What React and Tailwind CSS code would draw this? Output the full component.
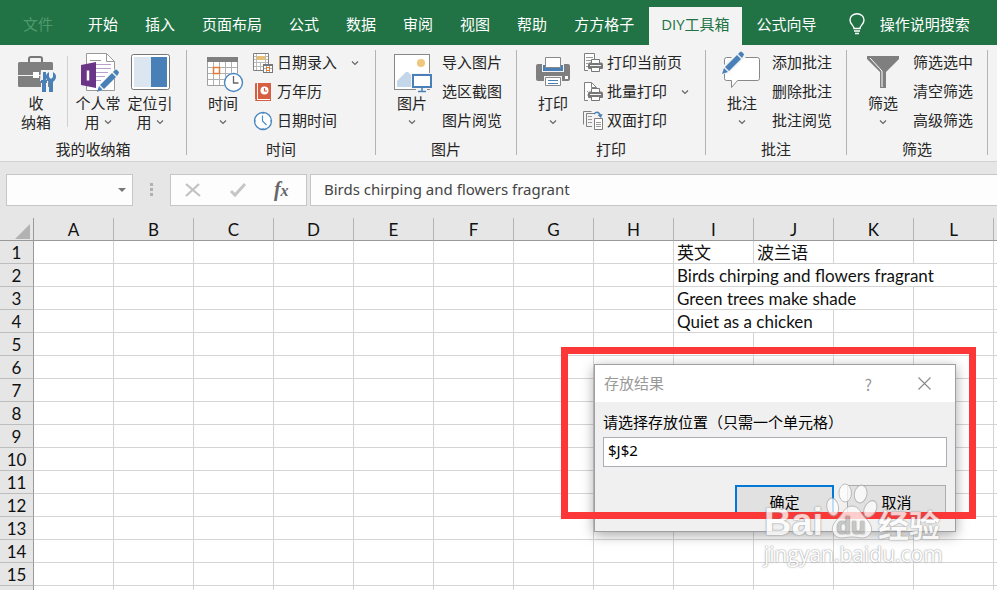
import { useState } from "react";

const tabs = ["开始", "插入", "页面布局", "公式", "数据", "审阅", "视图", "帮助", "方方格子", "DIY工具箱", "公式向导"];
const columns = ["A", "B", "C", "D", "E", "F", "G", "H", "I", "J", "K", "L", ""];
const rows = [1, 2, 3, 4, 5, 6, 7, 8, 9, 10, 11, 12, 13, 14, 15, ""];

// text cells by row, span = how many columns the text runs over
const cells = {
  1: { I: { text: "英文", span: 1 }, J: { text: "波兰语", span: 1 } },
  2: { I: { text: "Birds chirping and flowers fragrant", span: 4 } },
  3: { I: { text: "Green trees make shade", span: 3 } },
  4: { I: { text: "Quiet as a chicken", span: 2 } },
};

function Big({ children }) {
  return (
    <svg width="46" height="45" viewBox="0 0 46 45" fill="none" className="shrink-0" aria-hidden="true">
      {children}
    </svg>
  );
}

function Small({ children }) {
  return (
    <svg width="20" height="20" viewBox="0 0 20 20" fill="none" className="shrink-0" aria-hidden="true">
      {children}
    </svg>
  );
}

function Chevron() {
  return (
    <svg width="8" height="8" viewBox="0 0 8 8" fill="none" stroke="#666" strokeWidth="1.2" className="inline-block shrink-0" aria-hidden="true">
      <path d="M1 2.5 4 5.5 7 2.5" />
    </svg>
  );
}

function ToolboxIcon() {
  return (
    <Big>
      <path d="M16 14v-3q0-2 2-2h9q2 0 2 2v3" stroke="#777" strokeWidth="2" />
      <rect x="5" y="14" width="35" height="25" rx="1.5" fill="#7f7f7f" />
      <path d="M5 27.5h35" stroke="#f3f3f3" />
      <rect x="20" y="24" width="6" height="6" fill="#fff" />
      <path d="M28 22h6v11h1v12h-7V33h-1zM34 22h9v9l-2 4v10h-5V34l-3-4z" fill="#f3f3f3" />
      <path d="M30 24h3v8h1v3h-1v9h-4v-9h-1v-3h2z" fill="#4a80b8" />
      <path d="M36 24v5l2 2 2-2v-5c5 3 3 8 0 10v10h-4V34c-3-2-5-7 0-10z" fill="#4a80b8" />
    </Big>
  );
}

function NotebookIcon() {
  return (
    <Big>
      <path d="M11.5 5.5h20l8 8v29h-28z" fill="#fff" stroke="#999" />
      <path d="M31.5 5.5v8h8" stroke="#999" />
      <path d="M15 12.5h11" stroke="#999" />
      <path d="M21 16.5h15M21 20.5h15M21 24.5h12M21 28.5h9M21 32.5h5" stroke="#b9a0cc" />
      <path d="M6 17l15-3v26l-15-3z" fill="#6a3587" />
      <path d="M13 22.5v10" stroke="#fff" strokeWidth="2.5" />
      <path d="M23 43l3-7L40 21l5 4-15 15z" fill="#f3f3f3" />
      <path d="M22 44l2-6 3.5 3.5zM25 37l12-12 4 4-12 12zM38 24l2-2q1-1 2 0l1.5 1.5q1 1 0 2L42 28z" fill="#4a80b8" />
    </Big>
  );
}

function PaneIcon() {
  return (
    <Big>
      <rect x="4.5" y="6.5" width="38" height="35" rx="2" fill="#fff" stroke="#777" />
      <rect x="7" y="9" width="17" height="30" fill="#dce6f1" />
      <rect x="24" y="9" width="16" height="30" fill="#4a80b8" />
    </Big>
  );
}

function CalendarIcon() {
  return (
    <Big>
      <path d="M7.5 12.5h30v25h-30z" fill="#fff" stroke="#a0a0a0" />
      <path d="M13.5 13v24M19.5 13v24M25.5 13v24M31.5 13v24M8 19.5h29M8 25.5h29M8 31.5h29" stroke="#b0b0b0" />
      <rect x="7" y="9" width="31" height="5" fill="#7f7f7f" />
      <rect x="13.5" y="19.5" width="6" height="6" fill="#fff" stroke="#e07b39" strokeWidth="1.5" />
      <circle cx="33.5" cy="34.5" r="10" fill="#f3f3f3" />
      <circle cx="33.5" cy="34.5" r="9" fill="#fff" stroke="#4a86c0" strokeWidth="1.4" />
      <path d="M33.5 28v7h5" stroke="#666" strokeWidth="1.3" />
    </Big>
  );
}

function PictureIcon() {
  return (
    <Big>
      <rect x="5.5" y="6.5" width="35" height="35" fill="#fff" stroke="#888" />
      <circle cx="32" cy="15" r="4" fill="#eec67c" />
      <path d="M8 39V33l9-9h2l5 5v10z" fill="#c3d6ea" />
      <path d="M22 25h22v16h-6v3H27v-3h-5z" fill="#f3f3f3" />
      <rect x="24" y="27" width="18" height="12" fill="#fff" stroke="#4a80b8" strokeWidth="2" />
      <path d="M33 40v3M29 43.5h8" stroke="#4a80b8" strokeWidth="1.5" />
    </Big>
  );
}

function PrinterIcon() {
  return (
    <Big>
      <path d="M8 16h30q2 0 2 2v13q0 2-2 2H8q-2 0-2-2V18q0-2 2-2z" fill="#7f7f7f" />
      <path d="M12 15h22v9H12z" fill="#f3f3f3" />
      <path d="M13 17h20v6H13z" fill="#4a80b8" />
      <path d="M15.5 9.5h15v10h-15z" fill="#fff" stroke="#888" />
      <path d="M14 28h18v10H14z" fill="#f3f3f3" />
      <path d="M15.5 29.5h15v8h-15z" fill="#fff" stroke="#888" />
      <path d="M18 32.5h10M18 35.5h10" stroke="#4a80b8" />
      <rect x="35" y="28" width="3" height="3" fill="#fff" />
    </Big>
  );
}

function CommentIcon() {
  return (
    <Big>
      <path d="M7.5 9.5h31q2 0 2 2v19q0 2-2 2h-20l-6 7v-7h-5q-2 0-2-2v-19q0-2 2-2z" fill="#fff" stroke="#888" />
      <path d="M1 27l3-9L19 3l8 6L10 25z" fill="#f3f3f3" />
      <path d="M3 26l2-6 4 4zM6 19L18 7l4 4L10 23zM19 6l2-2q1-1 2 0l1.5 1.5q1 1 0 2L23 10z" fill="#4a80b8" />
    </Big>
  );
}

function FunnelIcon() {
  return (
    <Big>
      <path d="M7 8h32v3L26 24v16h-6V24L7 11z" fill="#7f7f7f" />
      <path d="M10 10l12 13v16" stroke="#fff" />
    </Big>
  );
}

function DateEntryIcon() {
  return (
    <Small>
      <path d="M.5.5h15v17H.5z" fill="#fff" stroke="#808080" />
      <path d="M1 9.5h14M1 13.5h14M3.5 1v16M7.5 9v8M12.5 1v16M1 3.5h2M13 3.5h2M1 6.5h2M13 6.5h2" stroke="#bbb" />
      <rect x="4" y="3" width="8" height="4" fill="#e9bf73" />
      <path d="M10 11h10v9H10z" fill="#777" />
      <path d="M11 13h8v6h-8z" fill="#fff" />
      <path d="M11 15.5h8M13.5 13v6M16.5 13v6" stroke="#aaa" />
      <rect x="13.5" y="14.5" width="3" height="3" fill="#fff" stroke="#e07b39" />
    </Small>
  );
}

function AlmanacIcon() {
  return (
    <Small>
      <path d="M2 2q0-1 1-1h1v16H2zM5 1h13v16H5z" fill="#d65f42" />
      <path d="M3 17h15v2H3q-1 0-1-1z" fill="#d65f42" />
      <path d="M4 17.5h13" stroke="#fff" />
      <circle cx="11.5" cy="8.5" r="4" fill="#fff" />
      <path d="M11.5 6v3H14" stroke="#d65f42" strokeWidth="1.2" />
    </Small>
  );
}

function ClockIcon() {
  return (
    <Small>
      <circle cx="10" cy="10" r="8.5" fill="#fff" stroke="#4a86c0" strokeWidth="1.3" />
      <path d="M9.5 4.5V10l4 4" stroke="#4a90c8" strokeWidth="1.2" />
      <path d="M10 1v2M10 17v2M1 10h2M17 10h2" stroke="#4a86c0" />
    </Small>
  );
}

function MiniPrinter() {
  return (
    <g>
      <path d="M5 8h15v11H5z" fill="#f3f3f3" />
      <path d="M7 9.5h11q2 0 2 2V15q0 1-1 1H6q-1 0-1-1v-3.5q0-2 2-2z" fill="#777" />
      <path d="M8.5 6.5h8v4h-8z" fill="#fff" stroke="#777" />
      <path d="M8.5 14.5h8v4h-8z" fill="#fff" stroke="#777" />
      <path d="M7 12.5h11" stroke="#f3f3f3" />
    </g>
  );
}

function PrintPageIcon() {
  return (
    <Small>
      <path d="M1.5.5h10v17h-10z" fill="#fff" stroke="#808080" />
      <path d="M3 4.5h7M3 7.5h5M3 10.5h3M3 13.5h3" stroke="#999" />
      <MiniPrinter />
    </Small>
  );
}

function PrintBatchIcon() {
  return (
    <Small>
      <path d="M1.5.5h7l5 5v13h-12z" fill="#fff" stroke="#808080" />
      <path d="M8.5.5v5h5" stroke="#808080" />
      <path d="M4 10l2-2M4 13h2" stroke="#999" />
      <MiniPrinter />
    </Small>
  );
}

function DuplexIcon() {
  return (
    <Small>
      <path d="M8.5.5h-8v13M12 2.5H3.5v13H9" stroke="#808080" />
      <path d="M5 5.5h4M5 8.5h4M5 11.5h4" stroke="#999" />
      <path d="M11.5 7.5h8v11h-8z" fill="#fff" stroke="#808080" />
      <path d="M13 11.5h5M13 13.5h5M13 15.5h5" stroke="#999" />
      <path d="M11 3q4-4 6.5 1.5" stroke="#4a80b8" strokeWidth="1.6" />
      <path d="M14.5 4l5-1-1.5 4z" fill="#4a80b8" />
    </Small>
  );
}

const groups = [
  {
    label: "时间",
    width: "w-[189px]",
    big: { icon: <CalendarIcon />, label: "时间" },
    items: [
      { icon: <DateEntryIcon />, label: "日期录入", menu: true },
      { icon: <AlmanacIcon />, label: "万年历" },
      { icon: <ClockIcon />, label: "日期时间" },
    ],
  },
  {
    label: "图片",
    width: "w-[141px]",
    big: { icon: <PictureIcon />, label: "图片" },
    items: [{ label: "导入图片" }, { label: "选区截图" }, { label: "图片阅览" }],
  },
  {
    label: "打印",
    width: "w-[189px]",
    big: { icon: <PrinterIcon />, label: "打印" },
    items: [
      { icon: <PrintPageIcon />, label: "打印当前页" },
      { icon: <PrintBatchIcon />, label: "批量打印", menu: true },
      { icon: <DuplexIcon />, label: "双面打印" },
    ],
  },
  {
    label: "批注",
    width: "w-[141px]",
    big: { icon: <CommentIcon />, label: "批注" },
    items: [{ label: "添加批注" }, { label: "删除批注" }, { label: "批注阅览" }],
  },
  {
    label: "筛选",
    width: "w-[141px]",
    big: { icon: <FunnelIcon />, label: "筛选" },
    items: [{ label: "筛选选中" }, { label: "清空筛选" }, { label: "高级筛选" }],
  },
];

function BigButton({ icon, lines, menu }) {
  return (
    <button type="button" className="flex w-[52px] shrink-0 flex-col items-center leading-[19px] whitespace-nowrap">
      {icon}
      <span>{lines[0]}</span>
      <span className="flex h-[19px] items-center gap-1">
        {lines[1]}
        {menu && <Chevron />}
      </span>
    </button>
  );
}

function Group({ label, width, children }) {
  return (
    <section className={`flex shrink-0 ${width}`}>
      <div className="flex flex-1 flex-col pt-[3px]">
        <div className="flex h-[87px] pl-[10px]">{children}</div>
        <h2 className="mt-1 text-center leading-5">{label}</h2>
      </div>
      <div className="mt-[5px] mb-[6px] w-px bg-[#b4b4b4]" />
    </section>
  );
}

function Ribbon() {
  return (
    <div className="flex h-[117px] shrink-0 overflow-hidden border-b border-[#d2d2d2] bg-[#f3f3f3] text-[15px] text-[#262626]">
      <Group label="我的收纳箱" width="w-[187px]">
        <BigButton icon={<ToolboxIcon />} lines={["收", "纳箱"]} />
        <div className="mt-2 mr-1 mb-2 ml-[5px] w-px bg-[#d0d0d0]" />
        <BigButton icon={<NotebookIcon />} lines={["个人常", "用"]} menu />
        <BigButton icon={<PaneIcon />} lines={["定位引", "用"]} menu />
      </Group>
      {groups.map((g) => (
        <Group key={g.label} label={g.label} width={g.width}>
          <BigButton icon={g.big.icon} lines={[g.big.label, ""]} menu />
          <div className="flex flex-col pl-1">
            {g.items.map((item) => (
              <button key={item.label} type="button" className="flex h-[29px] items-center gap-1 whitespace-nowrap">
                {item.icon}
                <span>{item.label}</span>
                {item.menu && (
                  <span className="flex pl-[10px]">
                    <Chevron />
                  </span>
                )}
              </button>
            ))}
          </div>
        </Group>
      ))}
    </div>
  );
}

function FormulaBar() {
  const [formula, setFormula] = useState("Birds chirping and flowers fragrant");

  return (
    <div className="flex h-14 shrink-0 items-start bg-[#e6e6e6] pt-3 pl-[6px]">
      <div className="relative">
        <select aria-label="名称框" className="block h-8 w-[127px] appearance-none border border-[#c6c6c6] bg-[#fdfdfd]">
          <option value=""></option>
        </select>
        <svg width="8" height="4" viewBox="0 0 8 4" className="pointer-events-none absolute top-[14px] right-[7px]" aria-hidden="true">
          <path d="M0 0h8L4 4z" fill="#777" />
        </svg>
      </div>
      <div className="flex h-8 w-[37px] flex-col items-center justify-center gap-[2px] pb-[2px]">
        <span className="size-[3px] bg-[#b0b0b0]" />
        <span className="size-[3px] bg-[#b0b0b0]" />
        <span className="size-[3px] bg-[#b0b0b0]" />
      </div>
      <div className="mr-[3px] flex h-8 w-[137px] items-center justify-around border border-[#c6c6c6] bg-[#fdfdfd] pr-1">
        <button type="button" aria-label="取消输入">
          <svg width="18" height="16" viewBox="0 0 18 16" fill="none" stroke="#c2c2c2" strokeWidth="2.2">
            <path d="M2 2l14 12M15 2L2 14" />
          </svg>
        </button>
        <button type="button" aria-label="输入">
          <svg width="18" height="16" viewBox="0 0 18 16" fill="none" stroke="#c6c6c6" strokeWidth="3">
            <path d="M2 9l4 4L16 2" />
          </svg>
        </button>
        <button type="button" className="font-['Liberation_Serif',serif] text-xl leading-6 font-bold text-[#666] italic">
          f<span className="text-base">x</span>
        </button>
      </div>
      <input
        aria-label="编辑栏"
        value={formula}
        onChange={(e) => setFormula(e.target.value)}
        className="h-8 min-w-0 flex-1 border border-r-0 border-[#c6c6c6] bg-[#fdfdfd] pb-[2px] pl-[13px] font-['Noto_Sans',sans-serif] text-[15px] text-[#444] outline-none"
      />
    </div>
  );
}

function Row({ n }) {
  const row = cells[n] || {};
  const out = [];
  for (let i = 0; i < columns.length; ) {
    const cell = row[columns[i]];
    const span = cell ? cell.span : 1;
    out.push(
      <td key={i} colSpan={span} className="h-[23px] border-r border-b border-[#d4d4d4] p-0 pt-[2px] pl-[3px] leading-5 whitespace-nowrap">
        {cell && cell.text}
      </td>
    );
    i += span;
  }
  return (
    <tr>
      <th className="h-[23px] border-r border-b border-r-[#999] border-b-[#bdbdbd] bg-[#e6e6e6] p-0 pt-[2px] leading-5 font-normal">{n}</th>
      {out}
    </tr>
  );
}

function Sheet() {
  return (
    <div className="min-h-0 flex-1 overflow-hidden bg-white font-['Lato','Noto_Sans_CJK_SC',sans-serif] text-[17px] text-[#111]">
      <table className="w-[1074px] table-fixed border-separate border-spacing-0">
        <colgroup>
          <col className="w-[34px]" />
          {columns.map((c, i) => (
            <col key={i} className="w-20" />
          ))}
        </colgroup>
        <thead>
          <tr className="bg-[#e6e6e6]">
            <th className="h-[23px] border-r border-b border-[#999] p-0" aria-label="全选">
              <svg width="15" height="15" viewBox="0 0 15 15" className="mt-1 mr-[3px] ml-auto" aria-hidden="true">
                <path d="M15 0v15H0z" fill="#b2b2b2" />
              </svg>
            </th>
            {columns.map((c, i) => (
              <th key={i} className="h-[23px] border-r border-b border-r-[#b4b4b4] border-b-[#999] p-0 pt-[2px] leading-5 font-normal">
                {c}
              </th>
            ))}
          </tr>
        </thead>
        <tbody>
          {rows.map((n) => (
            <Row key={n} n={n} />
          ))}
        </tbody>
      </table>
    </div>
  );
}

function ResultDialog() {
  const [value, setValue] = useState("$J$2");

  return (
    <div role="dialog" aria-labelledby="dialog-title" className="border border-[#9f9fa3] bg-[#f0f0f0] text-[15px] text-black shadow-[0_3px_12px_rgba(0,0,0,0.35)]">
      <div className="flex h-[37px] items-center bg-white pr-6 pl-[9px] text-[#999]">
        <h1 id="dialog-title" className="flex-1">存放结果</h1>
        <button type="button" className="mr-[46px] text-base">?</button>
        <button type="button" aria-label="关闭">
          <svg width="13" height="13" viewBox="0 0 13 13" stroke="#888" strokeWidth="1.1">
            <path d="M.5.5l12 12M12.5.5l-12 12" />
          </svg>
        </button>
      </div>
      <div className="px-2 pt-[10px] pb-3">
        <label htmlFor="target" className="block leading-5 whitespace-nowrap">请选择存放位置（只需一个单元格）</label>
        <input
          id="target"
          value={value}
          onChange={(e) => setValue(e.target.value)}
          className="mt-[5px] block h-[30px] w-full border border-[#abadb3] bg-white px-1 pb-1 font-['Noto_Sans',sans-serif] outline-none"
        />
        <div className="mt-[18px] flex justify-end gap-[13px] pr-px">
          <button type="button" className="h-[34px] w-[99px] border-2 border-[#0078d7] bg-[#e1e1e1]">确定</button>
          <button type="button" className="h-[34px] w-[99px] border border-[#adadad] bg-[#e1e1e1]">取消</button>
        </div>
      </div>
    </div>
  );
}

function Watermark() {
  return (
    <div className="pointer-events-none absolute top-[482px] left-[764px] w-[180px] whitespace-nowrap text-white opacity-75 [text-shadow:0_0_2px_#777,0_0_1px_#999]">
      <div className="flex h-[60px] items-end font-bold">
        <span className="w-[60px] font-['Liberation_Sans',sans-serif] text-[38px] leading-10">Bai</span>
        <span className="relative h-[60px] w-[54px]">
          <svg width="54" height="60" viewBox="0 0 56 60" preserveAspectRatio="none" fill="#fff" stroke="#aaa" strokeWidth="1" aria-hidden="true">
            <ellipse cx="9" cy="25" rx="6" ry="9" transform="rotate(-12 9 25)" />
            <ellipse cx="22" cy="11" rx="6.5" ry="9" />
            <ellipse cx="38" cy="12" rx="6.5" ry="9" transform="rotate(12 38 12)" />
            <ellipse cx="48" cy="27" rx="6" ry="9" transform="rotate(30 48 27)" />
            <path d="M29 24c8 0 9 8 15 13 6 6 7 12 3 16-5 5-11 2-18 2s-13 3-18-2c-4-4-3-10 3-16 6-5 7-13 15-13z" />
          </svg>
          <span className="absolute inset-x-0 bottom-1 text-center font-['Liberation_Sans',sans-serif] text-2xl leading-6 text-[#bbb]">du</span>
        </span>
        <span className="text-[31px] leading-9">经验</span>
      </div>
      <div className="font-['Open_Sans',sans-serif] text-[21px] leading-6">jingyan.baidu.com</div>
    </div>
  );
}

export default function App() {
  const [active, setActive] = useState("DIY工具箱");

  return (
    <div className="relative flex h-screen flex-col overflow-hidden font-['Noto_Sans_CJK_SC',sans-serif]">
      <nav className="flex h-[45px] shrink-0 items-end gap-[3px] bg-[#217346] pl-[11px] font-['Open_Sans','Noto_Sans_CJK_SC',sans-serif] text-[15px] whitespace-nowrap text-white">
        <button type="button" className="h-[38px] w-[62px] px-3 pb-1 text-left text-[#4f9a6b]">文件</button>
        {tabs.map((t) => (
          <button
            key={t}
            type="button"
            onClick={() => setActive(t)}
            className={`h-[38px] px-3 pb-1 ${t === active ? "bg-[#f3f3f3] text-[#217346]" : ""}`}
          >
            {t}
          </button>
        ))}
        <button type="button" className="flex h-[38px] items-center gap-[15px] pb-1 pl-[17px]">
          <svg width="16" height="22" viewBox="0 0 16 22" fill="none" stroke="#fff" strokeWidth="1.4" aria-hidden="true">
            <path d="M5 15.5c0-3-4-4-4-8.5a7 6.3 0 0 1 14 0c0 4.5-4 5.5-4 8.5zM5 18h6M6 20.5h4" />
          </svg>
          操作说明搜索
        </button>
      </nav>
      <Ribbon />
      <FormulaBar />
      <Sheet />

      <div className="absolute top-[364px] left-[594px] w-[362px]">
        <ResultDialog />
      </div>
      {/* highlight around the dialog */}
      <div className="pointer-events-none absolute top-[347px] left-[561px] h-[172px] w-[415px] border-[7px] border-[#fc3737]" />
      <Watermark />
    </div>
  );
}
